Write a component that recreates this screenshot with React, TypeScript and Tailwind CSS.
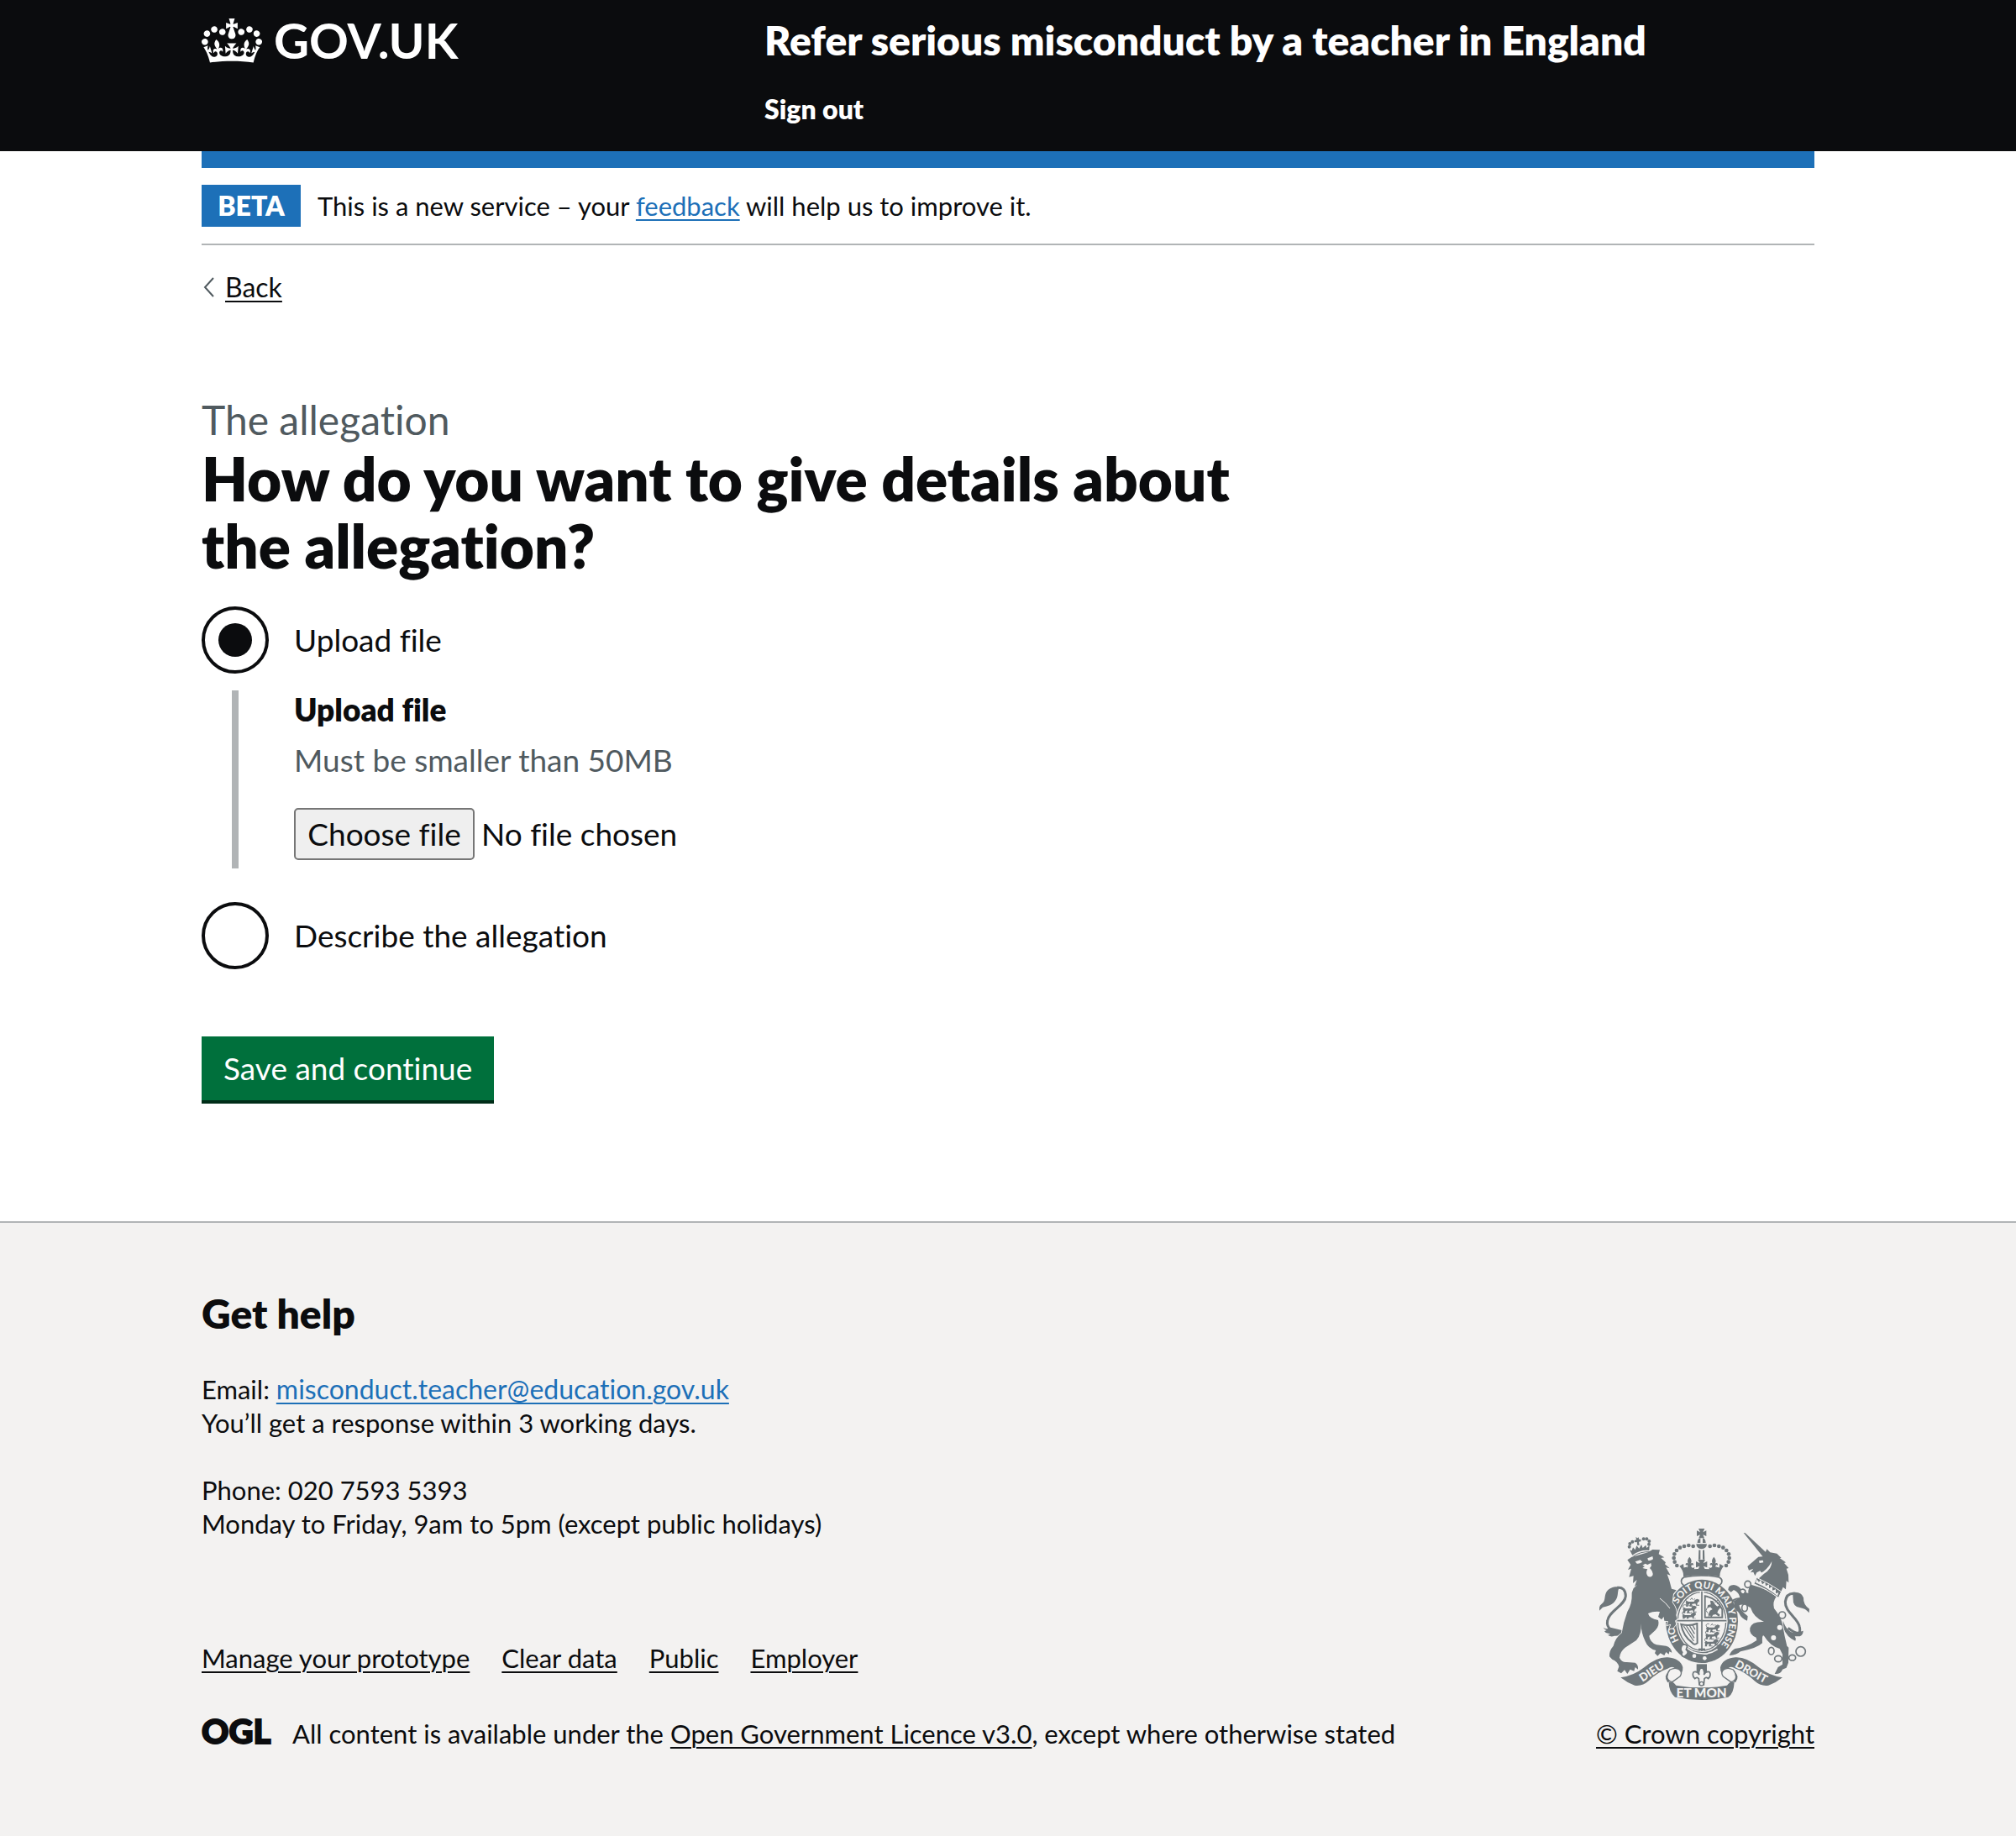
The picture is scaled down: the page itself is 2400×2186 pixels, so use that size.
import { useState } from "react";
import type { ReactNode } from "react";

const CREST = "#6f777b";
const PAPER = "#f3f2f1";

function CrownLogo() {
  return (
    <svg viewBox="0 0 132 97" className="h-[53px] w-[72px]" fill="currentColor" aria-hidden="true">
      <path
        fillRule="evenodd"
        d="M25 30.2c3.5 1.5 7.7-.2 9.1-3.7 1.5-3.6-.2-7.8-3.9-9.2-3.6-1.4-7.6.3-9.1 3.9-1.4 3.5.3 7.5 3.9 9zM9 39.5c3.6 1.5 7.8-.2 9.2-3.7 1.5-3.6-.2-7.8-3.9-9.1-3.6-1.5-7.6.2-9.1 3.8-1.4 3.5.3 7.5 3.8 9zM4.4 57.2c3.5 1.5 7.7-.2 9.1-3.8 1.5-3.6-.2-7.7-3.9-9.1-3.5-1.5-7.6.3-9.1 3.8-1.4 3.5.3 7.6 3.9 9.1zm38.3-21.4c3.5 1.5 7.7-.2 9.1-3.8 1.5-3.6-.2-7.7-3.9-9.1-3.6-1.5-7.6.3-9.1 3.8-1.3 3.6.4 7.7 3.9 9.1zm64.4-5.6c-3.6 1.5-7.8-.2-9.1-3.7-1.5-3.6.2-7.8 3.8-9.2 3.6-1.4 7.7.3 9.2 3.9 1.3 3.5-.4 7.5-3.9 9zm15.9 9.3c-3.6 1.5-7.7-.2-9.1-3.7-1.5-3.6.2-7.8 3.7-9.1 3.6-1.5 7.7.2 9.2 3.8 1.5 3.5-.3 7.5-3.8 9zm4.7 17.7c-3.6 1.5-7.8-.2-9.2-3.8-1.5-3.6.2-7.7 3.9-9.1 3.6-1.5 7.7.3 9.2 3.8 1.3 3.5-.4 7.6-3.9 9.1zM89.3 35.8c-3.6 1.5-7.8-.2-9.2-3.8-1.4-3.6.2-7.7 3.9-9.1 3.6-1.5 7.7.3 9.2 3.8 1.4 3.6-.3 7.7-3.9 9.1zM69.7 17.7l8.9 4.7V9.3l-8.9 2.8c-.2-.3-.5-.6-.9-.9L72.4 0H59.6l3.5 11.2c-.3.3-.6.5-.9.9l-8.8-2.8v13.1l8.8-4.7c.3.3.6.7.9.9l-5 15.4v.1c-.2.8-.4 1.6-.4 2.4 0 4.1 3.1 7.5 7 8.1h.2c.3 0 .7.1 1 .1.4 0 .7 0 1-.1h.2c4-.6 7.1-4.1 7.1-8.1 0-.8-.1-1.7-.4-2.4V34l-5.1-15.4c.4-.2.7-.6 1-.9zM66 92.8c16.9 0 32.8 1.1 47.1 3.2 4-16.9 8.9-26.7 14-33.5l-9.6-3.4c1 4.9 1.1 7.2 0 10.2-1.5-1.4-3-4.3-4.2-8.7L108.6 76c2.8-2 5-3.2 7.5-3.3-4.4 9.4-10 11.9-13.6 11.2-4.3-.8-6.3-4.6-5.6-7.9 1-4.7 5.7-5.9 8-.5 4.3-8.7-3-11.4-7.6-8.8 7.1-7.2 7.9-13.5 2.1-21.1-8 6.1-8.1 12.3-4.5 20.8-4.7-5.4-12.1-2.5-9.5 6.2 3.4-5.2 7.9-2 7.2 3.1-.6 4.3-6.4 7.8-13.5 7.2-10.3-.9-10.9-8-11.2-13.8 2.5-.5 7.1 1.8 11 7.3L80.2 60c-4.1 4.4-8 5.3-12.3 5.4 1.4-4.4 8-11.6 8-11.6H55.5s6.4 7.2 7.9 11.6c-4.2-.1-8-1-12.3-5.4l1.4 16.4c3.9-5.5 8.5-7.7 10.9-7.3-.3 5.8-.9 12.8-11.1 13.8-7.2.6-12.9-2.9-13.5-7.2-.7-5 3.8-8.3 7.1-3.1 2.7-8.7-4.6-11.6-9.4-6.2 3.7-8.5 3.6-14.7-4.6-20.8-5.8 7.6-5 13.9 2.2 21.1-4.7-2.6-11.9.1-7.7 8.8 2.3-5.5 7.1-4.2 8.1.5.7 3.3-1.3 7.1-5.7 7.9-3.5.7-9-1.8-13.5-11.2 2.5.1 4.7 1.3 7.5 3.3l-4.7-15.4c-1.2 4.4-2.7 7.2-4.3 8.7-1.1-3-.9-5.3 0-10.2l-9.5 3.4c5 6.9 9.9 16.7 14 33.5 14.8-2.1 30.8-3.2 47.7-3.2z"
      />
    </svg>
  );
}

const leftPearls: [number, number][] = [
  [407, 129], [391, 126], [375, 129], [360, 134], [348, 144], [340, 157], [338, 171], [341, 185], [349, 198],
];

function FleurDeLis({ x, y }: { x: number; y: number }) {
  return (
    <g transform={`translate(${x} ${y})`}>
      <path d="M0-26c9 10 8 18 3 26 5-8 14-4 10 5-1-4-7-3-7 2 1 7 8 8 12 4l-3 14h-30l-3-14c4 4 11 3 12-4 0-5-6-6-7-2-4-9 5-13 10-5-5-8-6-16 3-26z" />
    </g>
  );
}

function ImperialCrown() {
  return (
    <g>
      <path d="M426 66h22l-6 13 12-6v20l-12-5 5 12h-20l5-12-12 5V73l12 6z" />
      <path d="M422 117q1-16 11-17v17zM452 117q-1-16-11-17v17z" />
      <path d="M418 121h38q-1 17-19 18-18-1-19-18z" />
      <path d="M428 142q5 2 5 0v34h-7l1-32zM446 142q-5 2-5 0v34h7l-1-32z" />
      {leftPearls.map(([x, y]) => (
        <g key={`${x}-${y}`}>
          <circle cx={x} cy={y} r="7" />
          <circle cx={874 - x} cy={y} r="7" />
        </g>
      ))}
      <FleurDeLis x={394} y={193} />
      <FleurDeLis x={481} y={193} />
      <path d="M424 177h26l-7 13 14-7v22l-13-5 6 13h-26l6-13-13 5v-22l14 7z" />
      <path d="M358 200l14-8 2 14 12-4-4 12q55-9 110 0l-4-12 12 4 2-14 14 8q-15 17-14 38-65-12-130 0 2-21-14-38z" />
      <path d="M374 240q63-13 126 0 14 7 8 21l-11 12q-59-24-120 0l-11-12q-5-14 8-21z" fill={PAPER} stroke={CREST} strokeWidth="5" />
    </g>
  );
}

function PassantLion({ x, y }: { x: number; y: number }) {
  return (
    <g transform={`translate(${x} ${y})`}>
      <path d="M2 12l6-5 4 3h20l3-6 8-4 8 3-1 7-5 3-2 8h8v3H40l-3-7-11 1-3 6h7v3H17l1-10-8 4 1 6H3l1-9z" />
      <path d="M6 10C-3 0 7-5 13-2M19 3l5-6 4 6M32 3l4-4" fill="none" stroke={CREST} strokeWidth="3" />
    </g>
  );
}

function Shield() {
  return (
    <g>
      <ellipse cx="438" cy="397" rx="92" ry="110" fill={PAPER} />
      <ellipse cx="438" cy="397" rx="86" ry="104" fill="none" stroke={CREST} strokeWidth="4" />
      <PassantLion x={378} y={317} />
      <PassantLion x={368} y={341} />
      <PassantLion x={366} y={365} />
      <path d="M449 307q44 8 62 48v28h-62z" fill="none" stroke={CREST} strokeWidth="6" />
      <path d="M461 372l6-13 9-5-8-8-12 5 4-12 10-2-2-14 10 2 7 12 8 7 7-4 5 7-8 10-4 9 10 8-4 6-12-8-9 2-6 9-3-2-1-6-5 8z" />
      <path d="M459 368q-10-10-3-18M484 330l12-9 5 6-8 8" fill="none" stroke={CREST} strokeWidth="3" />
      <path d="M364 408q29 8 57-3l1 70q-11 10-19-2-32-24-39-65z" fill="none" stroke={CREST} strokeWidth="6" />
      <path d="M373 414l36 54M383 414l28 43M394 413l18 29M405 411l9 16" stroke={CREST} strokeWidth="4" />
      <PassantLion x={451} y={409} />
      <PassantLion x={449} y={434} />
      <PassantLion x={446} y={460} />
      <path d="M438 290V504M350 395H526" stroke={PAPER} strokeWidth="14" />
      <path d="M438 290V504M350 395H526" stroke={CREST} strokeWidth="5" />
      <path d="M426 494h24v8h-24z" />
    </g>
  );
}

function Garter() {
  return (
    <g>
      <ellipse cx="438" cy="397" rx="129" ry="149" />
      <Shield />
      <path id="garter-arc" d="M357 466A99 118 0 1 1 497 491" fill="none" />
      <text fill={PAPER} fontFamily="Lato, 'Liberation Sans', sans-serif" fontWeight="900" fontSize="34">
        <textPath href="#garter-arc">{"HO\u00a0\u00a0\u00a0\u00a0\u00a0\u00a0\u00a0\u00a0\u00a0\u00a0SOIT QUI MAL Y PENSE"}</textPath>
      </text>
      <path d="M380 486q20 26 62 27 26 2 52-16" fill="none" stroke={PAPER} strokeWidth="5" />
      <path d="M368 482q12-6 18 4l-4 12q10 8 2 18l-10 8q-12-4-6-16-10-12 0-26z" fill={PAPER} stroke={CREST} strokeWidth="5" />
      <circle cx="411" cy="521" r="7" fill={PAPER} />
      <circle cx="448" cy="529" r="7" fill={PAPER} />
    </g>
  );
}

function Lion() {
  return (
    <g transform="translate(60 45)">
      {/* tail */}
      <path d="M92 390C58 396 36 374 41 350C46 314 104 296 106 262C106 240 94 229 76 232" fill="none" stroke={CREST} strokeWidth="9" />
      <path d="M88 230C74 234 82 258 72 274C62 294 38 300 24 302L12 314Q10 296 20 290C36 280 28 262 38 246C48 232 68 226 88 230Z" />
      <path d="M26 374Q38 384 52 374L92 384L94 394Q84 406 66 404Q52 410 40 400Q48 402 50 396Q36 398 30 388L38 384Q30 382 26 374Z" />
      {/* body */}
      <path
        d="M112 133L128 122L150 116L185 106L202 96L228 97L224 112L244 124L232 126L249 142L246 148L263 163L250 160L266 188L254 184L262 206L270 236L287 241L276 254L272 284Q292 310 286 330L290 344L282 350L286 362L276 376L262 378L268 362L254 366L258 352L244 350L242 336L234 346L222 336L228 318Q204 316 186 324Q190 342 222 348Q228 368 212 384L190 404Q192 426 216 436L250 440Q268 444 271 464L262 460L260 470L250 462L244 474L230 466L220 476L210 466L214 456Q186 450 176 424Q162 396 160 360Q164 398 144 420Q126 432 104 446Q86 460 84 482Q92 500 110 498L140 500Q152 508 150 524L140 516L136 530L122 524L112 540L102 526L90 538L76 530L82 514Q78 496 58 488L48 478Q46 458 62 440Q70 410 92 394Q98 356 112 318Q130 290 128 250L134 234L148 222L138 228L146 204L132 216L134 190L118 194L126 164L114 168L124 150Z"
        stroke={PAPER}
        strokeWidth="5"
        paintOrder="stroke"
      />
      <path d="M228 270Q250 286 264 306" fill="none" stroke={PAPER} strokeWidth="3" />
      {/* face */}
      <path d="M140 139L158 133L166 140Q154 148 146 146ZM184 127L202 120L204 130Q194 138 186 134ZM166 152L176 146L184 150L196 144L198 154L192 162Q206 176 202 188Q194 198 184 190Q176 178 184 166Q174 164 166 162L174 156Z" fill={PAPER} />
      {/* crown */}
      <path d="M120 97L128 100L132 88L140 97L145 82L154 92L162 78L167 90L178 80L181 90L191 82L190 99Q158 96 130 116Z" />
      <path d="M133 120Q160 102 192 104" fill="none" stroke={CREST} strokeWidth="3" />
      <path d="M142 51L148 55L152 52L154 59L161 60L160 67L153 68L155 80L148 81L146 69L138 70L137 63L144 61Z" />
      {([[119, 86], [121, 75], [130, 68], [170, 58], [181, 58], [190, 66], [189, 77]] as [number, number][]).map(([x, y]) => (
        <circle key={x} cx={x} cy={y} r="6" />
      ))}
    </g>
  );
}

const chainRings: [number, number, number, number][] = [
  [182, 220, 11, 12], [171, 304, 10, 13], [305, 330, 12, 12], [266, 458, 10, 13], [291, 486, 13, 11], [341, 482, 12, 10], [371, 460, 17, 17],
];

function Unicorn() {
  return (
    <g transform="translate(420 45)">
      {/* tail */}
      <path d="M326 376Q376 414 367 372C362 340 314 320 316 282Q320 250 350 253" fill="none" stroke={CREST} strokeWidth="9" />
      <path d="M340 249Q374 244 381 268Q380 294 402 308L401 322Q388 306 370 304Q342 300 344 272Q344 256 340 249Z" />
      <path d="M308 350Q322 392 352 394L380 386Q380 400 368 406L350 406Q356 414 352 422Q322 410 308 374Z" />
      {/* horn */}
      <path d="M167 36L173 37L252 110L238 124Z" />
      {/* head and mane */}
      <path d="M181 156L206 134L220 122L240 120L250 94L262 106L286 110L302 126L296 126L318 142L312 144L328 162L320 164L327 186L328 214L320 208L318 238L308 230L300 248Q276 224 214 202L232 180L226 172L214 178L208 190L202 176L192 178L202 164L186 170Z" />
      <path d="M222 136L236 134L238 142L224 144ZM268 138Q268 166 240 182L220 200L216 196L228 180Q252 168 268 138Z" fill={PAPER} />
      {/* body */}
      <path
        d="M196 222Q250 236 284 264Q270 282 276 306Q300 336 306 362Q312 400 322 440L328 446L327 500L320 518L306 524Q300 542 278 540L290 516L306 506L306 470L296 450Q262 440 240 404Q232 398 234 430Q216 448 156 460Q144 472 116 474Q122 458 136 450Q180 444 214 420L212 410Q186 400 190 376Q196 352 240 354Q204 340 192 304Q170 288 152 294Q150 302 168 322L182 334L180 350Q160 344 150 322Q132 302 132 280L154 268Q152 250 132 240L122 248L112 240Q112 222 132 222Q152 224 162 244L184 252Q182 232 196 222Z"
        stroke={PAPER}
        strokeWidth="5"
        paintOrder="stroke"
      />
      <path d="M154 270Q124 272 128 288L146 316" fill="none" stroke={CREST} strokeWidth="6" />
      {/* collar */}
      <path d="M214 196Q258 216 302 246L292 268Q250 236 204 218Z" stroke={PAPER} strokeWidth="3" />
      <path d="M210 214L214 202L222 212L228 204L234 220L244 212L246 226L258 220L258 234L270 228L270 242L282 238L282 252L292 250L288 262Q252 232 210 214Z" fill={PAPER} />
      <g fill={PAPER} stroke={CREST} strokeWidth="5">
        <path d="M154 242Q166 232 174 244L170 254Q158 258 154 242Z" />
        {chainRings.map(([x, y, rx, ry]) => (
          <ellipse key={x} cx={x} cy={y} rx={rx} ry={ry} />
        ))}
      </g>
      <g fill={PAPER}>
        <circle cx="296" cy="374" r="9" />
        <circle cx="274" cy="411" r="9" />
      </g>
    </g>
  );
}

function MottoRibbon() {
  return (
    <g>
      <path d="M148 598q46-6 84-36 44-38 84-36 46 4 54 36 2 22-22 38l-32 16q-18-24 6-40l22-8q-8-14-28-2-36 12-68 44-22 20-50 16-28-10-50-28z" />
      <path d="M726 598q-46-6-84-36-44-38-84-36-46 4-54 36-2 22 22 38l32 16q18-24-6-40l-22-8q8-14 28-2 36 12 68 44 22 20 50 16 28-10 50-28z" />
      <path d="M324 570q20-10 34 0 12 10 2 24l-28 20q-16-4-18-18 0-14 10-26zM550 570q-20-10-34 0-12 10-2 24l28 20q16-4 18-18 0-14-10-26z" fill={PAPER} stroke={CREST} strokeWidth="4" />
      <path d="M320 614q16-4 26 12 90 16 182 0 10-16 26-12-2 42-22 54-94 20-190 0-22-20-22-54z" />
      <g fill={PAPER} fontFamily="Lato, 'Liberation Sans', sans-serif" fontWeight="900" fontSize="40" textAnchor="middle">
        <text transform="translate(266 588) rotate(-33)">DIEU</text>
        <text transform="translate(608 589) rotate(29)">DROIT</text>
        <text x="437" y="668" fontSize="46">ET MON</text>
      </g>
      <path d="M419 550h37v32h-37z" />
      <path d="M437 560q14 14 8 28 8-14 20-10 8 12-4 24-8-8-14 0l-2 22h-16l-2-22q-6-8-14 0-12-12-4-24 12-4 20 10-6-14 8-28z" fill={PAPER} stroke={CREST} strokeWidth="5" />
      <circle cx="437" cy="620" r="7" fill={PAPER} stroke={CREST} strokeWidth="4" />
    </g>
  );
}

function RoyalCrest() {
  return (
    <svg viewBox="72 66 750 612" className="h-[204px] w-[250px]" fill={CREST} aria-hidden="true">
      <ImperialCrown />
      <Garter />
      <Lion />
      <Unicorn />
      <MottoRibbon />
    </svg>
  );
}

function FooterLink({ children, href = "#" }: { children: ReactNode; href?: string }) {
  return (
    <a href={href} className="underline decoration-2 underline-offset-4">
      {children}
    </a>
  );
}

function RadioOption({ id, label, checked, onSelect }: { id: string; label: string; checked: boolean; onSelect: () => void }) {
  return (
    <div className="flex h-20 items-center gap-[30px]">
      <input
        id={id}
        type="radio"
        name="allegation-format"
        checked={checked}
        onChange={onSelect}
        className="size-20 shrink-0 appearance-none rounded-full border-4 border-[#0b0c0e] bg-white bg-clip-content p-4 checked:bg-[#0b0c0e]"
      />
      <label htmlFor={id} className="text-[37px] leading-[50px]">
        {label}
      </label>
    </div>
  );
}

export default function App() {
  const [format, setFormat] = useState("upload");
  const [fileName, setFileName] = useState("No file chosen");

  return (
    <div className="min-h-screen bg-[#f3f2f1] font-['Lato','Liberation_Sans',sans-serif] text-[31px] leading-[40px] text-[#0b0c0e] [font-variant-ligatures:none]">
      <div className="bg-white pb-[140px]">
        <header className="bg-[#0b0c0e] pt-[18px] pb-[30px] text-white">
          <div className="mx-auto grid w-4/5 max-w-[1920px] grid-cols-[670px_1fr]">
            <a href="#" className="flex h-[60px] items-center gap-[14px]">
              <CrownLogo />
              <span className="text-[58px] leading-[60px] font-bold">GOV.UK</span>
            </a>
            <div>
              <a href="#" className="block text-[48px] leading-[60px] font-extrabold">
                Refer serious misconduct by a teacher in England
              </a>
              <nav className="mt-8 text-[32px] font-extrabold">
                <a href="#">Sign out</a>
              </nav>
            </div>
          </div>
        </header>

        <div className="mx-auto w-4/5 max-w-[1920px]">
          <div className="h-5 bg-[#1d70b8]" />
          <div className="flex items-center gap-5 border-b-2 border-[#b1b4b6] py-5">
            <strong className="flex h-[50px] w-[118px] items-center justify-center bg-[#1d70b8] text-[32px] font-extrabold text-white">BETA</strong>
            <p>
              This is a new service – your{" "}
              <a href="#" className="text-[#1d70b8] underline decoration-2 underline-offset-4">
                feedback
              </a>{" "}
              will help us to improve it.
            </p>
          </div>

          <a href="#" className="mt-[30px] flex w-fit items-center gap-3">
            <svg viewBox="0 0 16 24" className="h-6 w-4" fill="none" stroke="#505a5f" strokeWidth="2" aria-hidden="true">
              <path d="M14 1L4 12l10 11" />
            </svg>
            <span className="text-[32px] underline decoration-2 underline-offset-4">Back</span>
          </a>

          <main className="mt-[108px] max-w-[1260px]">
            <form onSubmit={(e) => e.preventDefault()}>
              <fieldset>
                <legend>
                  <span className="block text-[48px] leading-[60px] text-[#505a5f]">The allegation</span>
                  <h1 className="text-[71px] leading-[80px] font-extrabold">How do you want to give details about the allegation?</h1>
                </legend>

                <div className="mt-8">
                  <RadioOption id="upload" label="Upload file" checked={format === "upload"} onSelect={() => setFormat("upload")} />
                  {format === "upload" && (
                    <div className="mt-5 ml-9 border-l-8 border-[#b1b4b6] pb-[10px] pl-[66px] text-[37px] leading-[46px]">
                      <label htmlFor="file" className="block font-extrabold">
                        Upload file
                      </label>
                      <p id="file-hint" className="mt-[14px] text-[#505a5f]">
                        Must be smaller than 50MB
                      </p>
                      <div className="relative mt-[34px] flex w-fit items-center gap-2">
                        <span className="flex h-[62px] w-[215px] items-center justify-center rounded-[5px] border-2 border-[#767676] bg-[#efefef]">
                          Choose file
                        </span>
                        <span>{fileName}</span>
                        <input
                          id="file"
                          type="file"
                          aria-describedby="file-hint"
                          onChange={(e) => setFileName(e.target.files?.[0]?.name ?? "No file chosen")}
                          className="absolute inset-0 cursor-pointer opacity-0"
                        />
                      </div>
                    </div>
                  )}
                  <div className="mt-10">
                    <RadioOption id="describe" label="Describe the allegation" checked={format === "describe"} onSelect={() => setFormat("describe")} />
                  </div>
                </div>
              </fieldset>

              <button type="submit" className="mt-20 block h-20 border-b-4 border-[#002d18] bg-[#00703c] px-[26px] text-[37px] leading-[46px] text-white">
                Save and continue
              </button>
            </form>
          </main>
        </div>
      </div>

      <footer className="border-t-2 border-[#b1b4b6] pt-[78px] pb-24">
        <div className="mx-auto flex w-4/5 max-w-[1920px] items-end justify-between">
          <div>
            <h2 className="text-[48px] leading-[60px] font-extrabold">Get help</h2>
            <p className="mt-10">
              Email:{" "}
              <a href="mailto:misconduct.teacher@education.gov.uk" className="text-[32px] text-[#1d70b8] underline decoration-2 underline-offset-4">
                misconduct.teacher@education.gov.uk
              </a>
              <br />
              You’ll get a response within 3 working days.
            </p>
            <p className="mt-10">
              Phone: 020 7593 5393
              <br />
              Monday to Friday, 9am to 5pm (except public holidays)
            </p>

            <ul className="mt-[120px] flex gap-[38px]">
              <li><FooterLink>Manage your prototype</FooterLink></li>
              <li><FooterLink>Clear data</FooterLink></li>
              <li><FooterLink>Public</FooterLink></li>
              <li><FooterLink>Employer</FooterLink></li>
            </ul>
            <div className="mt-[50px] flex items-start gap-[26px]">
              <span className="w-[82px] text-[40px] leading-[34px] font-black [-webkit-text-stroke:2px_#0b0c0e]">OGL</span>
              <span>
                All content is available under the <FooterLink>Open Government Licence v3.0</FooterLink>, except where otherwise stated
              </span>
            </div>
          </div>
          <div className="flex flex-col items-end gap-5">
            <div className="pr-[6px]">
              <RoyalCrest />
            </div>
            <FooterLink>© Crown copyright</FooterLink>
          </div>
        </div>
      </footer>
    </div>
  );
}
